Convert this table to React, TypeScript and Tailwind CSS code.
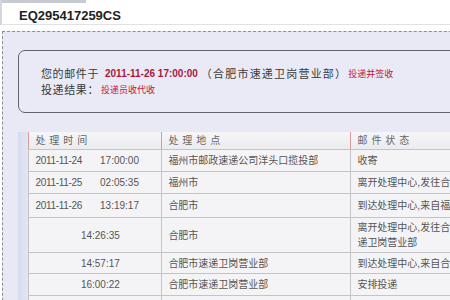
const CJK = "font-['Liberation_Sans','Noto_Sans_CJK_SC',sans-serif]"

type Row = {
  date?: string
  time: string
  place: string
  status: string[]
  h: string
}

const rows: Row[] = [
  { date: '2011-11-24', time: '17:00:00', place: '福州市邮政速递公司洋头口揽投部', status: ['收寄'], h: 'h-[22px]' },
  { date: '2011-11-25', time: '02:05:35', place: '福州市', status: ['离开处理中心,发往合肥'], h: 'h-[22px]' },
  { date: '2011-11-26', time: '13:19:17', place: '合肥市', status: ['到达处理中心,来自福州'], h: 'h-[24px]' },
  { time: '14:26:35', place: '合肥市', status: ['离开处理中心,发往合肥', '递卫岗营业部'], h: 'h-[35px]' },
  { time: '14:57:17', place: '合肥市速递卫岗营业部', status: ['到达处理中心,来自合肥'], h: 'h-[21px]' },
  { time: '16:00:22', place: '合肥市速递卫岗营业部', status: ['安排投递'], h: 'h-[22px]' },
  { time: '', place: '', status: [''], h: 'h-[22px]' },
]

export default function App() {
  return (
    <div className={`w-[450px] h-[300px] overflow-hidden bg-white ${CJK}`}>
      {/* title strip */}
      <div className="h-[25px] border-l-2 border-b border-l-[#d3d6e0] border-b-[#e2e2e2]">
        <div className="h-[3px] w-[84px] bg-[#c8cad1]" />
        <div className="pl-[17px] pt-[5px] text-[13px] leading-[15px] font-bold text-[#222]">EQ295417259CS</div>
      </div>

      {/* dashed panel */}
      <div className="mt-[6px] ml-[2px] w-[470px] h-[300px] border-t border-l border-dashed border-[#8c8c94] bg-[#e8e9f4] pt-[18px] pl-[15px]">
        <div className="h-[63px] w-[460px] rounded-[7px] border border-[#62646c] bg-[#e9eaf5] pt-[15px] pl-[22px] text-[11px] leading-[16px] text-[#3a3a3a]">
          <div className="flex items-center whitespace-nowrap">
            <span className="tracking-[0.6px]">您的邮件于</span>
            <span className="ml-[6px] text-[10px] font-bold text-[#a8183f]">2011-11-26 17:00:00</span>
            <span className="ml-[3px] tracking-[1.2px]">（合肥市速递卫岗营业部）</span>
            <span className="ml-[1px] text-[9px] text-[#c8123c]">投递并签收</span>
          </div>
          <div className="flex items-center whitespace-nowrap">
            <span className="tracking-[0.6px]">投递结果：</span>
            <span className="ml-[2px] text-[9px] text-[#c8123c]">投递员收代收</span>
          </div>
        </div>

        {/* tracking table */}
        <div className="mt-[19px] flex">
          <div className="w-[11px] bg-gradient-to-r from-[#d6dbee] to-[#e3e6f2]" />
          <div className="w-[470px] text-[10px] text-[#555]">
            <div className="flex h-[18px] items-center border-b border-[#c4c4c8] bg-gradient-to-b from-[#f6f6f8] to-[#ececef] text-[#666]">
              <div className="w-[133px] h-full flex items-center border-l border-[#d99a9a] pl-[6px] tracking-[4px]">处理时间</div>
              <div className="w-[189px] h-full flex items-center border-l border-[#d99a9a] pl-[6px] tracking-[4px]">处理地点</div>
              <div className="flex-1 h-full flex items-center border-l border-[#d99a9a] pl-[6px] tracking-[4px]">邮件状态</div>
            </div>
            {rows.map((r, i) => (
              <div key={i} className={`flex border-b border-[#c4c4c8] bg-[#f4f4f6] ${r.h}`}>
                <div className="w-[133px] flex items-center border-l border-[#c4c4c8] pl-[6px]">
                  {r.date ? (
                    <>
                      <span className="tracking-[-0.3px]">{r.date}</span>
                      <span className="ml-[18px]">{r.time}</span>
                    </>
                  ) : (
                    <span className="w-full text-center pl-[4px]">{r.time}</span>
                  )}
                </div>
                <div className="w-[189px] flex items-center border-l border-[#c4c4c8] pl-[6px] whitespace-nowrap">{r.place}</div>
                <div className="flex-1 flex flex-col justify-center border-l border-[#c4c4c8] pl-[6px] leading-[15px] whitespace-nowrap">
                  {r.status.map((s, j) => (
                    <span key={j}>{s}</span>
                  ))}
                </div>
              </div>
            ))}
          </div>
        </div>
      </div>
    </div>
  )
}
